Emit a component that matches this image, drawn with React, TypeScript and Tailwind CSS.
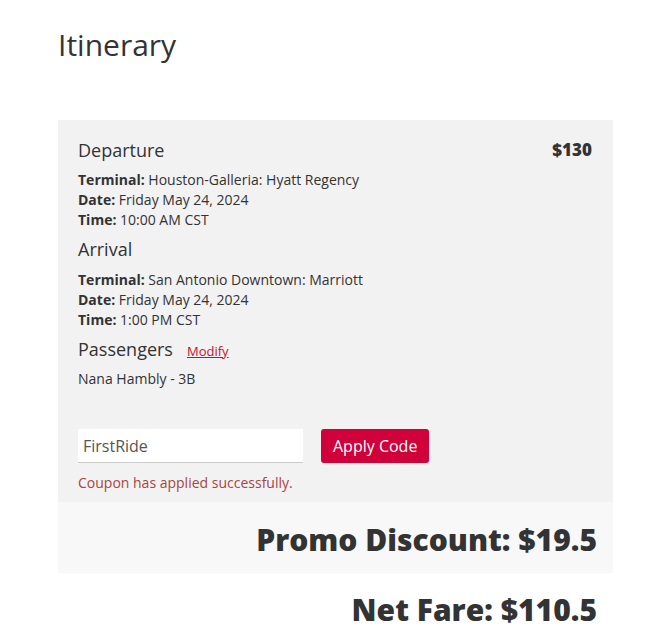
export default function App() {
  return (
    <div
      className="min-h-screen bg-white text-[#333333]"
      style={{ fontFamily: '"Open Sans", "Liberation Sans", sans-serif' }}>
      <div className="w-[555px] ml-[58px] pt-[25px]">
        <h1 className="text-[30px] leading-[40px]">Itinerary</h1>

        <div className="mt-[55px] bg-[#f2f2f2] px-[20px] pt-[17px] pb-[9px]">
          <div className="flex items-start justify-between">
            <h2 className="text-[18px] leading-[26px]">Departure</h2>
            <span className="text-[17px] leading-[26px] font-extrabold pr-px">$130</span>
          </div>
          <div className="mt-[7px] text-[14px] leading-[20px]">
            <div>
              <b>Terminal:</b> Houston-Galleria: Hyatt Regency
            </div>
            <div>
              <b>Date:</b> Friday May 24, 2024
            </div>
            <div>
              <b>Time:</b> 10:00 AM CST
            </div>
          </div>

          <h2 className="mt-[6px] text-[18px] leading-[26px]">Arrival</h2>
          <div className="mt-[8px] text-[14px] leading-[20px]">
            <div>
              <b>Terminal:</b> San Antonio Downtown: Marriott
            </div>
            <div>
              <b>Date:</b> Friday May 24, 2024
            </div>
            <div>
              <b>Time:</b> 1:00 PM CST
            </div>
          </div>

          <div className="mt-[6px] flex items-baseline gap-[14px]">
            <h2 className="text-[18px] leading-[26px]">Passengers</h2>
            <a href="#" className="text-[13px] text-[#c8102e] underline">
              Modify
            </a>
          </div>
          <div className="mt-[7px] text-[14px] leading-[20px]">Nana Hambly - 3B</div>

          <div className="mt-[40px] flex items-center gap-[18px]">
            <input
              defaultValue="FirstRide"
              className="w-[225px] h-[34px] bg-white border-b border-[#cccccc] px-[5px] text-[16px] text-[#555555] outline-none"
            />
            <button className="h-[34px] px-[12px] rounded-[3px] bg-[#d0003a] text-white text-[16px]">
              Apply Code
            </button>
          </div>
          <div className="mt-[10px] text-[14px] leading-[20px] text-[#a94442]">
            Coupon has applied successfully.
          </div>
        </div>

        <div className="bg-[#f8f8f8] h-[71px] pt-[4px] flex items-center justify-end pr-[16px]">
          <span className="text-[30px] font-extrabold leading-[40px]">Promo Discount: $19.5</span>
        </div>
        <div className="h-[74px] flex items-center justify-end pr-[16px]">
          <span className="text-[30px] font-extrabold leading-[40px]">Net Fare: $110.5</span>
        </div>
      </div>
    </div>
  );
}
